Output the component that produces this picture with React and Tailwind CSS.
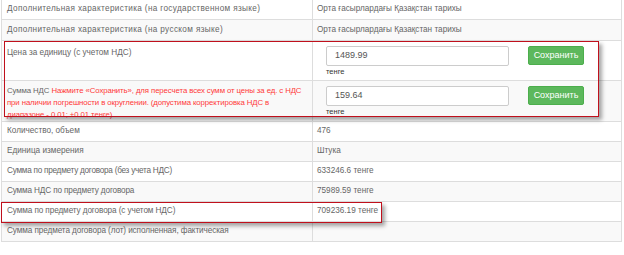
import React from "react";

function Row({ label, value, gray, h = "h-[20px]", lt = "" }) {
  return (
    <div className={`flex ${h} border-b border-[#dddddd] ${gray ? "bg-[#f9f9f9]" : "bg-white"}`}>
      <div className={`w-[311px] shrink-0 border-r border-[#dddddd] pl-[5px] flex items-center whitespace-nowrap ${lt}`}>{label}</div>
      <div className="flex-1 pl-[4px] flex items-center whitespace-nowrap">{value}</div>
    </div>
  );
}

function SaveButton() {
  return (
    <button className="w-[56px] h-[19px] rounded-[2px] bg-[#5cb85c] border border-[#4cae4c] text-white text-[9px] leading-none flex items-center justify-center">
      Сохранить
    </button>
  );
}

function PriceInput({ value }) {
  return (
    <div className="flex flex-col">
      <div className="w-[183px] h-[20px] border border-[#cccccc] rounded-[2px] bg-white pl-[8px] flex items-center text-[9px] text-[#555]">
        {value}
      </div>
      <div className="text-[7.5px] text-[#333] mt-[1px] leading-[10px]">тенге</div>
    </div>
  );
}

export default function App() {
  return (
    <div className="relative w-[624px] h-[255px] bg-white overflow-hidden font-['Liberation_Sans',Arial,sans-serif] text-[8.2px] text-[#666]">
      <div className="ml-[1px] w-[621px] border-l border-r border-[#dddddd]">
        <Row lt="tracking-[0.35px]" label="Дополнительная характеристика (на государственном языке)" value="Орта ғасырлардағы Қазақстан тарихы" />
        <Row lt="tracking-[0.35px]" gray h="h-[21px]" label="Дополнительная характеристика (на русском языке)" value="Орта ғасырлардағы Қазақстан тарихы" />
        <div className="flex h-[40px] border-b border-[#dddddd] bg-white">
          <div className="w-[311px] shrink-0 border-r border-[#dddddd] pl-[5px] pt-[6px]">Цена за единицу (с учетом НДС)</div>
          <div className="flex-1 pl-[13px] pt-[5px] flex items-start gap-[19px]">
            <PriceInput value="1489.99" />
            <SaveButton />
          </div>
        </div>
        <div className="flex h-[41px] border-b border-[#dddddd] bg-[#f9f9f9] overflow-hidden">
          <div className="w-[311px] shrink-0 border-r border-[#dddddd] pl-[5px] pt-[4px] leading-[12px] whitespace-nowrap text-[7.8px] tracking-[-0.1px]">
            Сумма НДС{" "}
            <span className="text-[#ff3a3a]">
              Нажмите «Сохранить», для пересчета всех сумм от цены за ед. с НДС
              <br />
              при наличии погрешности в округлении. (допустима корректировка НДС в
              <br />
              диапазоне - 0.01; +0.01 тенге)
            </span>
          </div>
          <div className="flex-1 pl-[13px] pt-[5px] flex items-start gap-[19px]">
            <PriceInput value="159.64" />
            <SaveButton />
          </div>
        </div>
        <Row label="Количество, объем" value="476" />
        <Row gray label="Единица измерения" value="Штука" />
        <Row lt="tracking-[-0.25px]" label="Сумма по предмету договора (без учета НДС)" value="633246.6 тенге" />
        <Row lt="tracking-[-0.15px]" gray label="Сумма НДС по предмету договора" value="75989.59 тенге" />
        <Row lt="tracking-[-0.1px]" label="Сумма по предмету договора (с учетом НДС)" value="709236.19 тенге" />
        <Row lt="tracking-[-0.1px]" gray label="Сумма предмета договора (лот) исполненная, фактическая" value="" />
      </div>

      <div className="absolute left-[4px] top-[41px] w-[595px] h-[76px] border-[1.5px] border-[#c0101c] shadow-[3px_3px_4px_rgba(0,0,0,0.35)]" />
      <div className="absolute left-[1px] top-[202px] w-[381px] h-[21px] border-[1.5px] border-[#c0101c] shadow-[3px_3px_4px_rgba(0,0,0,0.35)]" />
    </div>
  );
}
